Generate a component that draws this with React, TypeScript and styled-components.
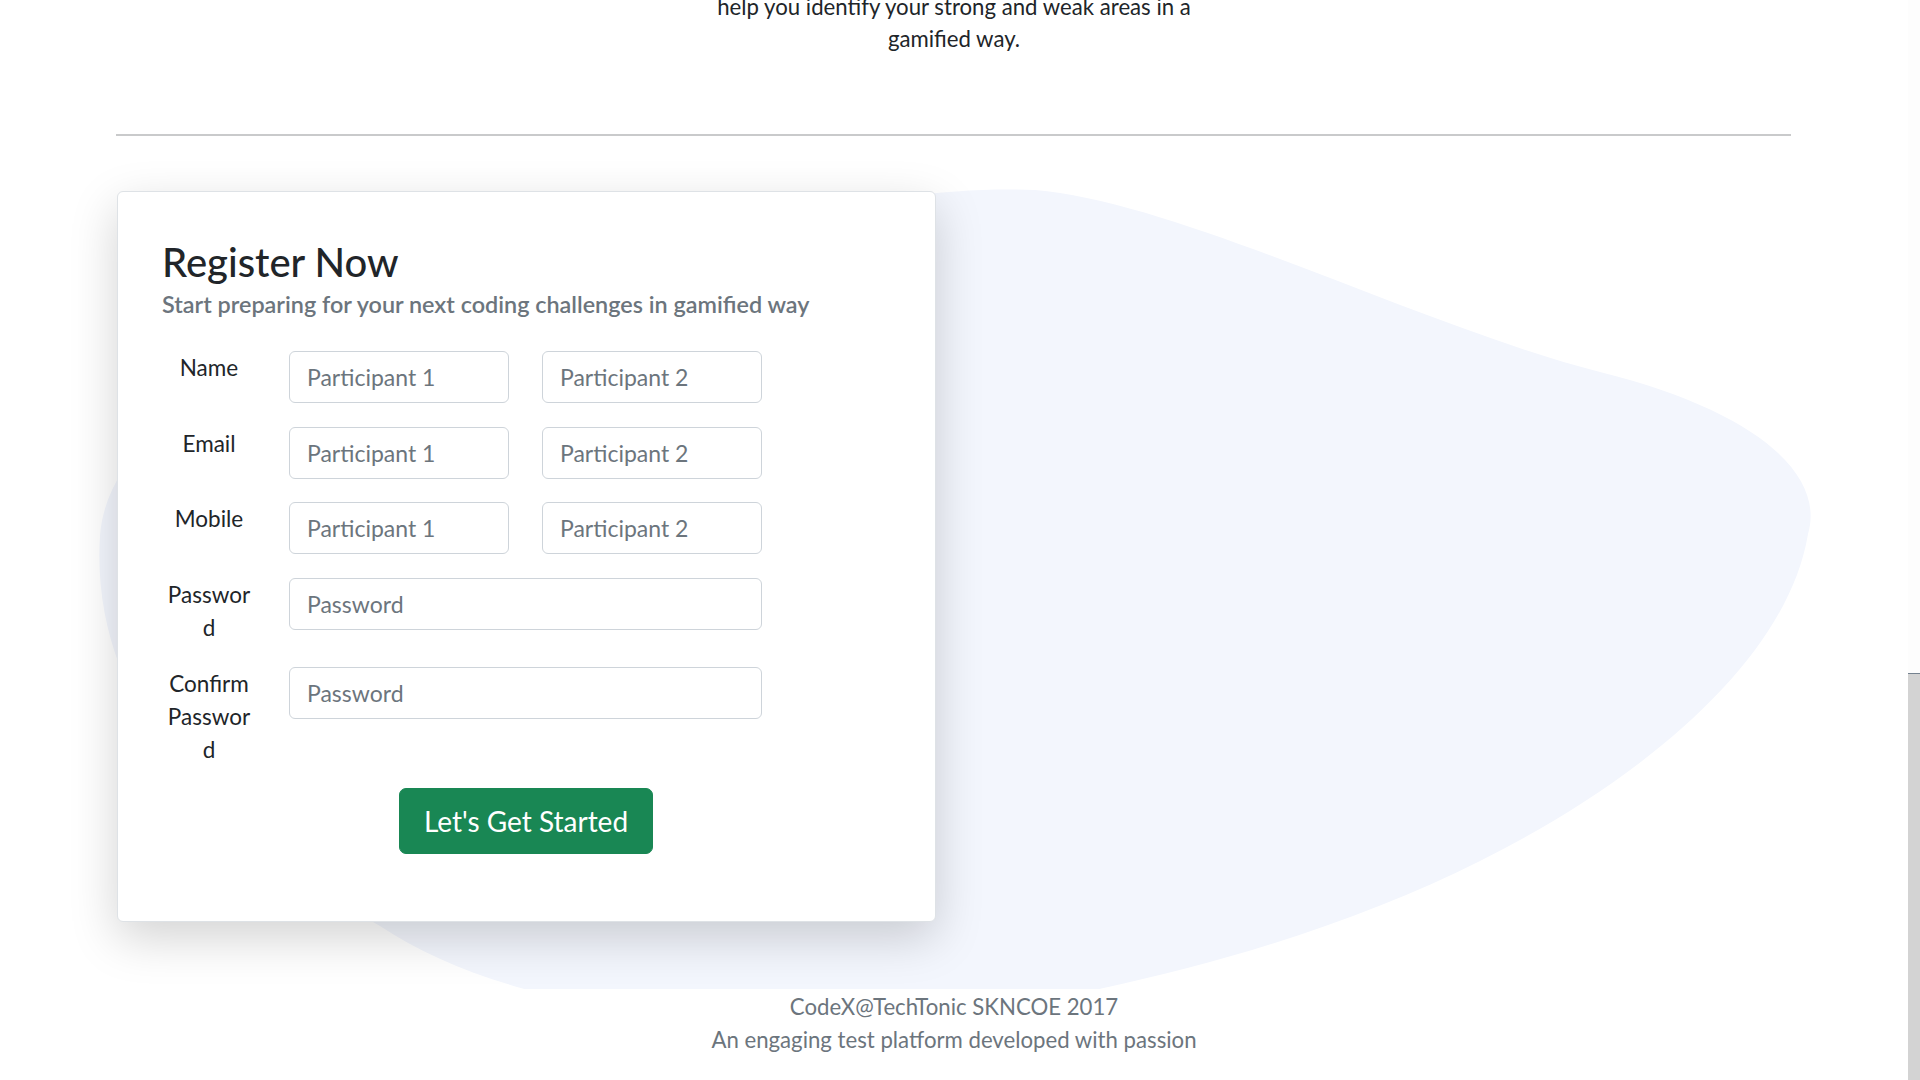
import styled, { createGlobalStyle } from "styled-components";

const GlobalStyle = createGlobalStyle`
  html, body {
    margin: 0;
    padding: 0;
    overflow: hidden;
    background: #fff;
  }
  body {
    font-family: Lato, "Open Sans", sans-serif;
    color: #212529;
  }
  * {
    box-sizing: border-box;
  }
`;

const nameFields = ["Name", "Email", "Mobile"];

const App = () => {
  return (
    <>
      <GlobalStyle />
      <Viewport>
        <Page>
          <Intro>
            help you identify your strong and weak areas in a gamified way.
          </Intro>
          <Divider />
          <RegisterSection>
            <Blob viewBox="0 0 1908 900" preserveAspectRatio="none">
              <path
                d="M1035 54 C1180 66 1420 190 1600 236 C1760 276 1825 340 1808 398 C1788 520 1650 640 1480 725 C1330 800 1150 850 950 880 C700 900 500 870 380 790 C200 690 90 560 100 400 C110 250 400 140 700 90 C850 66 950 50 1035 54 Z"
                fill="#f3f6fd"
              />
            </Blob>
            <Card>
              <Title>Register Now</Title>
              <Subtitle>
                Start preparing for your next coding challenges in gamified way
              </Subtitle>
              <FormGrid>
                {nameFields.map((field) => (
                  <Row key={field}>
                    <FieldLabel>{field}</FieldLabel>
                    <Input placeholder="Participant 1" />
                    <Input placeholder="Participant 2" />
                  </Row>
                ))}
                <Row>
                  <FieldLabel>Password</FieldLabel>
                  <Input type="password" placeholder="Password" $wide />
                </Row>
                <Row>
                  <FieldLabel>Confirm Password</FieldLabel>
                  <Input type="password" placeholder="Password" $wide />
                </Row>
              </FormGrid>
              <Actions>
                <StartButton>Let's Get Started</StartButton>
              </Actions>
            </Card>
          </RegisterSection>
          <Footer>
            <FooterLine>CodeX@TechTonic SKNCOE 2017</FooterLine>
            <FooterLine>An engaging test platform developed with passion</FooterLine>
          </Footer>
        </Page>
        <ScrollTrack>
          <ScrollThumb />
        </ScrollTrack>
      </Viewport>
    </>
  );
};

export default App;

const Viewport = styled.div`
  display: flex;
  width: 1920px;
  height: 1080px;
  overflow: hidden;
`;

const Page = styled.div`
  flex: 1;
  display: flex;
  flex-direction: column;
  min-width: 0;
`;

const Intro = styled.p`
  margin: -9px auto 0;
  max-width: 500px;
  text-align: center;
  font-size: 22.2px;
  line-height: 32px;
  color: #212529;
`;

const Divider = styled.hr`
  margin: 79px 117px 0 116px;
  border: 0;
  border-top: 2px solid #c9cacb;
  height: 0;
`;

const RegisterSection = styled.section`
  position: relative;
  overflow: hidden;
  padding: 55px 0 67px 117px;
  height: 853px;
`;

const Blob = styled.svg`
  position: absolute;
  left: 0;
  top: 0;
  width: 1908px;
  height: 900px;
  z-index: 0;
`;

const Card = styled.div`
  position: relative;
  z-index: 1;
  width: 819px;
  height: 731px;
  padding: 46px 44px 0;
  background: #fff;
  border: 1px solid #dee2e6;
  border-radius: 6px;
  box-shadow: 0 1rem 3rem rgba(0, 0, 0, 0.175);
`;

const Title = styled.h1`
  margin: 0;
  font-size: 40px;
  font-weight: 500;
  line-height: 1.2;
  color: #212529;
`;

const Subtitle = styled.h5`
  margin: 4px 0 0;
  font-size: 23.4px;
  font-weight: 600;
  line-height: 1.2;
  color: #6c757d;
`;

const FormGrid = styled.div`
  margin-top: 33px;
  display: flex;
  flex-direction: column;
  row-gap: 23.5px;
`;

const Row = styled.div`
  display: grid;
  grid-template-columns: 94px 220px 220px;
  column-gap: 33px;
  align-items: start;
`;

const FieldLabel = styled.label`
  display: block;
  text-align: center;
  font-size: 22.5px;
  line-height: 33px;
  color: #212529;
  word-break: break-all;
  padding: 0 2px;
`;

const Input = styled.input<{ $wide?: boolean }>`
  grid-column: ${(p) => (p.$wide ? "2 / 4" : "auto")};
  width: 100%;
  height: 52px;
  padding: 8px 17px;
  font-family: Lato, sans-serif;
  font-size: 23px;
  line-height: 1.5;
  color: #212529;
  background: #fff;
  border: 1px solid #ced4da;
  border-radius: 6px;
  outline: none;

  &::placeholder {
    color: #6c757d;
  }
`;

const Actions = styled.div`
  margin-top: 22px;
  display: flex;
  justify-content: center;
  width: 601px;
  padding-left: 127px;
`;

const StartButton = styled.button`
  font-family: Lato, sans-serif;
  font-size: 28px;
  line-height: 1.5;
  padding: 11px 24px;
  color: #fff;
  background: #198754;
  border: 1px solid #198754;
  border-radius: 7px;
  cursor: pointer;
`;

const Footer = styled.footer`
  text-align: center;
  padding-top: 1px;
  color: #6c757d;
`;

const FooterLine = styled.div`
  font-size: 22.2px;
  line-height: 33px;
`;

const ScrollTrack = styled.div`
  width: 12px;
  height: 1080px;
  display: flex;
  flex-direction: column;
  background: #fdfdfd;
`;

const ScrollThumb = styled.div`
  margin-top: auto;
  height: 407px;
  background: #d3d3d3;
  border-top: 1px solid #75828f;
`;
